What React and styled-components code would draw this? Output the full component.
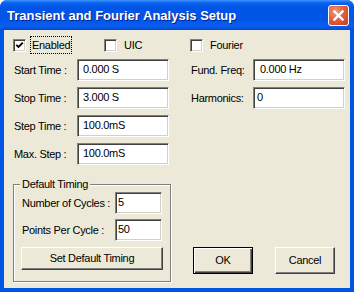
import React from 'react'
import styled, { createGlobalStyle } from 'styled-components'

const GlobalStyle = createGlobalStyle`
  html, body {
    margin: 0;
    padding: 0;
    background: #ffffff;
  }
  body {
    font-family: "Liberation Sans", Arial, sans-serif;
    font-size: 11px;
    letter-spacing: -0.3px;
    color: #000;
  }
`

const Window = styled.div`
  width: 354px;
  height: 292px;
  box-sizing: border-box;
  display: flex;
  flex-direction: column;
  background: #0055e5;
  border-radius: 7px 7px 0 0;
  overflow: hidden;
`

const TitleBar = styled.div`
  height: 30px;
  flex: none;
  display: flex;
  align-items: center;
  justify-content: space-between;
  padding: 0 5px 0 7px;
  box-sizing: border-box;
  background: linear-gradient(#3d95ff 0px, #0a61ee 3px, #0055e6 8px, #0056e8 20px, #0a5ff0 26px, #0049d8 30px);
`

const Title = styled.div`
  color: #fff;
  font-family: "Liberation Sans", Arial, sans-serif;
  font-weight: bold;
  font-size: 13px;
  letter-spacing: 0;
  text-shadow: 1px 1px #0a1e8c;
  padding-top: 1px;
`

const CloseButton = styled.div`
  width: 21px;
  height: 21px;
  box-sizing: border-box;
  border: 1px solid #fff;
  border-radius: 3px;
  background: radial-gradient(circle at 35% 30%, #f09a7c 0%, #e2613e 45%, #c83a1c 100%);
  display: flex;
  align-items: center;
  justify-content: center;
`

const Body = styled.div`
  flex: 1;
  margin: 0 4px 4px;
  background: #ece9d8;
  display: grid;
  grid-template-columns: 177px 1fr;
  padding: 6px 0 0 9px;
  box-sizing: border-box;
  white-space: nowrap;
`

const Column = styled.div`
  display: flex;
  flex-direction: column;
`

const CheckRow = styled.div`
  height: 18px;
  display: flex;
  align-items: center;
`

const CheckItem = styled.div`
  display: flex;
  align-items: center;
  width: ${p => p.w || 'auto'};
`

const Box = styled.div`
  width: 13px;
  height: 13px;
  box-sizing: border-box;
  background: #fff;
  border-style: solid;
  border-width: 1px;
  border-color: #808080 #fff #fff #808080;
  box-shadow: inset 1px 1px #404040, inset -1px -1px #d4d0c8;
  display: flex;
  align-items: center;
  justify-content: center;
`

const CheckLabel = styled.span`
  margin-left: ${p => (p.focus ? '4px' : '5px')};
  padding: 1px 1px;
  line-height: 14px;
  border: 1px ${p => (p.focus ? 'dotted #000' : 'solid transparent')};
`

const Fields = styled.div`
  display: flex;
  flex-direction: column;
  gap: 6px;
  margin-top: 5px;
`

const FieldRow = styled.div`
  display: flex;
  align-items: center;
  height: 22px;
`

const Label = styled.span`
  width: ${p => p.w}px;
  padding-left: 1px;
  box-sizing: border-box;
  flex: none;
`

const TextBox = styled.input`
  width: ${p => p.w}px;
  height: ${p => p.h || 22}px;
  box-sizing: border-box;
  margin: 0;
  padding: 0 0 2px ${p => p.pad}px;
  font-family: "Liberation Sans", Arial, sans-serif;
  font-size: 11px;
  letter-spacing: -0.3px;
  color: #000;
  background: #fff;
  outline: none;
  border-style: solid;
  border-width: 1px;
  border-color: #808080 #fff #fff #808080;
  box-shadow: inset 1px 1px #404040, inset -1px -1px #d4d0c8;
`

const Group = styled.fieldset`
  margin: 12px 0 0 0;
  width: 158px;
  box-sizing: border-box;
  padding: 1px 6px 11px 7px;
  border: 1px solid #808080;
  box-shadow: inset 1px 1px #fff, 1px 1px #fff;
  display: flex;
  flex-direction: column;
`

const Legend = styled.legend`
  padding: 0 2px;
  margin-left: -1px;
  line-height: 14px;
  background: #ece9d8;
`

const GroupRows = styled.div`
  display: flex;
  flex-direction: column;
  gap: 5px;
`

const Button = styled.div`
  width: ${p => p.w}px;
  height: ${p => p.h}px;
  margin-top: ${p => p.top || 0}px;
  box-sizing: border-box;
  display: flex;
  align-items: center;
  justify-content: center;
  background: #ece9d8;
  border: 1px solid;
  border-color: ${p => (p.primary ? '#000' : '#fff #404040 #404040 #fff')};
  box-shadow: ${p =>
    p.primary
      ? 'inset 1px 1px #fff, inset -1px -1px #404040, inset -2px -2px #808080'
      : 'inset -1px -1px #808080'};
  padding-bottom: 1px;
`

const ButtonRow = styled.div`
  margin-top: auto;
  margin-bottom: 14px;
  margin-left: 3px;
  display: flex;
  gap: 22px;
`

const Check = () => (
  <svg width="9" height="9" viewBox="0 0 9 9">
    <path d="M1.3 3.8 L3.5 6 L7.8 1.7" fill="none" stroke="#000" strokeWidth="1.9" />
  </svg>
)

const Close = () => (
  <svg width="11" height="11" viewBox="0 0 11 11">
    <path d="M1.5 1.5 L9.5 9.5 M9.5 1.5 L1.5 9.5" stroke="#fff" strokeWidth="2.4" strokeLinecap="square" />
  </svg>
)

export default function App() {
  const left = [
    ['Start Time :', '0.000 S'],
    ['Stop Time :', '3.000 S'],
    ['Step Time :', '100.0mS'],
    ['Max. Step :', '100.0mS'],
  ]
  return (
    <>
      <GlobalStyle />
      <Window>
        <TitleBar>
          <Title>Transient and Fourier Analysis Setup</Title>
          <CloseButton><Close /></CloseButton>
        </TitleBar>
        <Body>
          <Column>
            <CheckRow>
              <CheckItem w="91px">
                <Box><Check /></Box>
                <CheckLabel focus>Enabled</CheckLabel>
              </CheckItem>
              <CheckItem>
                <Box />
                <CheckLabel>UIC</CheckLabel>
              </CheckItem>
            </CheckRow>
            <Fields>
              {left.map(([l, v]) => (
                <FieldRow key={l}>
                  <Label w={64}>{l}</Label>
                  <TextBox w={92} pad={5} defaultValue={v} readOnly />
                </FieldRow>
              ))}
            </Fields>
            <Group>
              <Legend>Default Timing</Legend>
              <GroupRows>
                <FieldRow>
                  <Label w={94}>Number of Cycles :</Label>
                  <TextBox w={47} pad={2} defaultValue="5" readOnly />
                </FieldRow>
                <FieldRow>
                  <Label w={94}>Points Per Cycle :</Label>
                  <TextBox w={47} pad={2} defaultValue="50" readOnly />
                </FieldRow>
              </GroupRows>
              <Button w={142} h={23} top={6}>Set Default Timing</Button>
            </Group>
          </Column>
          <Column>
            <CheckRow>
              <CheckItem>
                <Box />
                <CheckLabel>Fourier</CheckLabel>
              </CheckItem>
            </CheckRow>
            <Fields>
              <FieldRow>
                <Label w={63}>Fund. Freq:</Label>
                <TextBox w={92} pad={6} defaultValue="0.000 Hz" readOnly />
              </FieldRow>
              <FieldRow>
                <Label w={63}>Harmonics:</Label>
                <TextBox w={92} pad={3} defaultValue="0" readOnly />
              </FieldRow>
            </Fields>
            <ButtonRow>
              <Button w={60} h={27} primary>OK</Button>
              <Button w={60} h={27}>Cancel</Button>
            </ButtonRow>
          </Column>
        </Body>
      </Window>
    </>
  )
}
